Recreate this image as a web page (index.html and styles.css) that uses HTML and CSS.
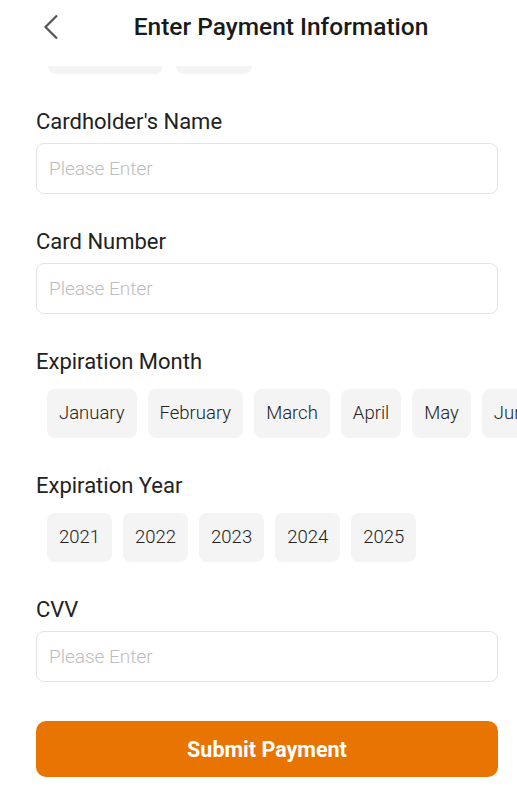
FILE: index.html
```html
<!DOCTYPE html>
<html>
<head>
    <title>Enter Payment Information</title>
    <link rel="stylesheet" href="styles.css">
</head>
<body>
    <div class="header">
        <a class="back" href="#">
            <svg width="16" height="26" viewBox="0 0 16 26"><path d="M14 1.5 L2.5 13 L14 24.5" fill="none" stroke="#555" stroke-width="2.2"/></svg>
        </a>
        <h1>Enter Payment Information</h1>
    </div>

    <div class="content">
        <!-- card type row, scrolled mostly out of view -->
        <div class="chips card-types">
            <span class="chip wide"></span>
            <span class="chip narrow"></span>
        </div>

        <div class="field">
            <label for="name">Cardholder's Name</label>
            <input type="text" id="name" placeholder="Please Enter">
        </div>

        <div class="field">
            <label for="number">Card Number</label>
            <input type="text" id="number" placeholder="Please Enter">
        </div>

        <div class="field">
            <label>Expiration Month</label>
            <div class="chips">
                <span class="chip">January</span>
                <span class="chip">February</span>
                <span class="chip">March</span>
                <span class="chip">April</span>
                <span class="chip">May</span>
                <span class="chip">June</span>
                <span class="chip">July</span>
            </div>
        </div>

        <div class="field">
            <label>Expiration Year</label>
            <div class="chips">
                <span class="chip">2021</span>
                <span class="chip">2022</span>
                <span class="chip">2023</span>
                <span class="chip">2024</span>
                <span class="chip">2025</span>
            </div>
        </div>

        <div class="field">
            <label for="cvv">CVV</label>
            <input type="text" id="cvv" placeholder="Please Enter">
        </div>

        <button class="submit">Submit Payment</button>
    </div>
</body>
</html>
```

FILE: styles.css
```css
body {
    margin: 0;
    padding: 0;
    font-family: Roboto, "Liberation Sans", sans-serif;
    color: #222;
    background: #fff;
    height: 802px;
    display: flex;
    flex-direction: column;
    overflow: hidden;
}
.header {
    display: flex;
    align-items: center;
    height: 52px;
    padding: 0 20px 14px 36px;
    flex-shrink: 0;
}
.header .back {
    display: flex;
    width: 22px;
    padding-left: 7px;
    margin-top: 2px;
}
.header h1 {
    flex: 1;
    margin: 0;
    text-align: center;
    font-size: 24.5px;
    font-weight: 500;
    color: #1a1a1a;
}
.content {
    flex: 1;
    overflow: hidden;
    padding: 0 19px 0 36px;
}
.chips {
    display: flex;
    gap: 11px;
    padding-left: 11px;
    margin-right: -19px;
    overflow: hidden;
}
.card-types {
    margin-top: -41px;
    padding-left: 12px;
    gap: 13px;
}
.card-types .wide {
    width: 91px;
}
.card-types .narrow {
    width: 52px;
}
.chip {
    flex-shrink: 0;
    height: 49px;
    line-height: 49px;
    padding: 0 12px;
    background: #f4f4f4;
    border-radius: 8px;
    font-size: 18.5px;
    font-weight: 300;
    color: #222;
}
.field {
    margin-top: 34px;
}
label {
    display: block;
    font-size: 22px;
    line-height: 28px;
    margin-bottom: 7px;
}
.field .chips {
    margin-top: 13px;
}
input[type="text"] {
    display: block;
    box-sizing: border-box;
    width: 100%;
    height: 51px;
    padding: 0 12px;
    border: 1px solid #e4e4e4;
    border-radius: 8px;
    font-family: inherit;
    font-size: 19px;
    font-weight: 300;
    outline: none;
}
input::placeholder {
    color: #bdbdbd;
}
.submit {
    display: block;
    width: 100%;
    height: 56px;
    margin-top: 39px;
    border: none;
    border-radius: 10px;
    background: #e87401;
    color: #fff;
    font-family: inherit;
    font-size: 21.5px;
    font-weight: 700;
}
```
